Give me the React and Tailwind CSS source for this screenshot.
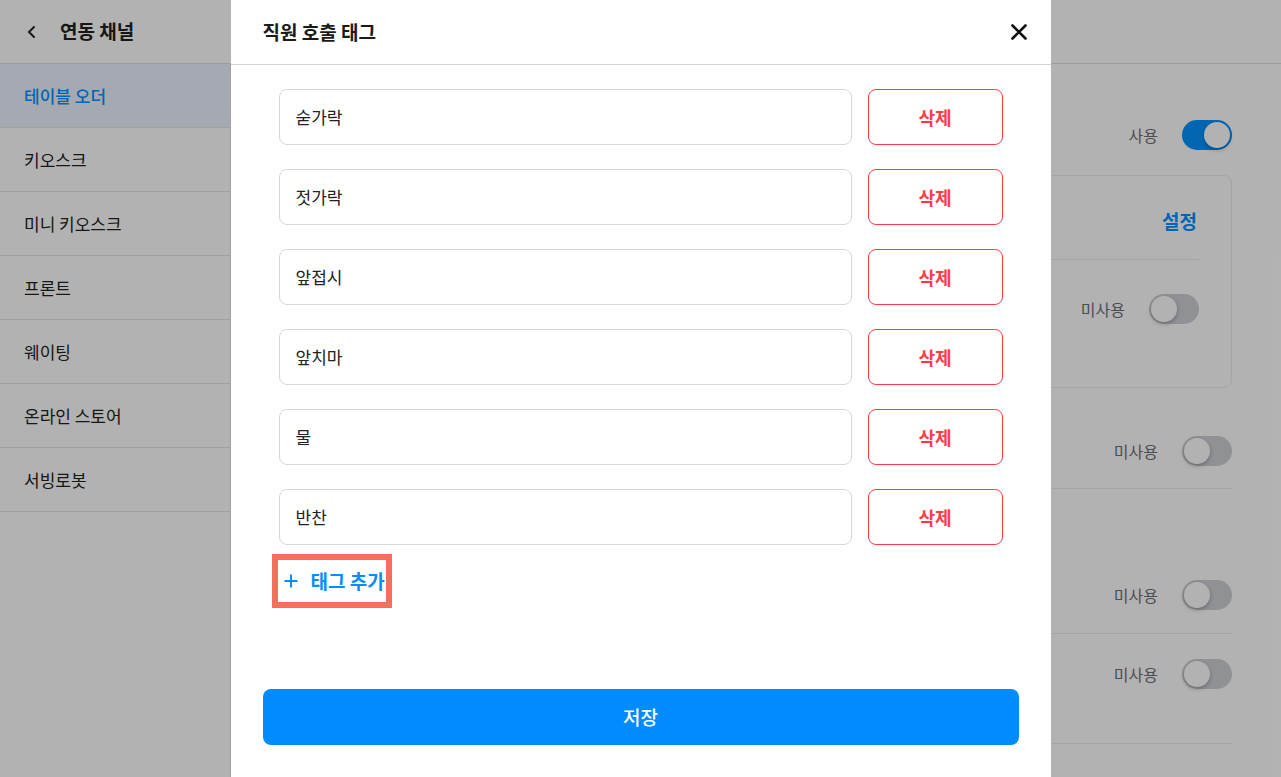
import React from "react";

const font = { fontFamily: '"Noto Sans CJK KR", "Noto Sans", sans-serif' };

function Toggle({ on }) {
  return (
    <div
      className={
        "relative w-[50px] h-[30px] rounded-full " +
        (on ? "bg-[#0092ff]" : "bg-[#cdd0d6]")
      }
    >
      <div
        className={
          "absolute top-[2px] w-[26px] h-[26px] rounded-full bg-white shadow-[0_2px_4px_rgba(0,0,0,0.25)] " +
          (on ? "right-[2px]" : "left-[2px]")
        }
      />
    </div>
  );
}

function ToggleRow({ label, on }) {
  return (
    <div className="flex items-center justify-end gap-6">
      <span className="text-[16px] text-[#6b6f7a]">{label}</span>
      <Toggle on={on} />
    </div>
  );
}

const sideItems = ["테이블 오더", "키오스크", "미니 키오스크", "프론트", "웨이팅", "온라인 스토어", "서빙로봇"];
const tags = ["숟가락", "젓가락", "앞접시", "앞치마", "물", "반찬"];

export default function App() {
  return (
    <div className="relative w-[1281px] h-[777px] overflow-hidden bg-white text-[#222]" style={font}>
      {/* underlying page */}
      <div className="flex flex-col h-full">
        <div className="h-[64px] flex items-center border-b border-[#e0e0e0] shrink-0">
          <svg width="16" height="16" viewBox="0 0 16 16" className="ml-[24px]">
            <path d="M10 3 L5 8 L10 13" fill="none" stroke="#222" strokeWidth="2" strokeLinecap="round" strokeLinejoin="round" />
          </svg>
          <span className="ml-[20px] text-[19px] font-bold">연동 채널</span>
        </div>
        <div className="flex flex-1">
          <div className="w-[231px] shrink-0 border-r border-[#e5e5e5]">
            {sideItems.map((s, i) => (
              <div
                key={s}
                className={
                  "h-[64px] flex items-center px-6 border-b border-[#e5e5e5] text-[17px] " +
                  (i === 0 ? "bg-[#edf3ff] text-[#0092ff] font-medium" : "text-[#222]")
                }
              >
                {s}
              </div>
            ))}
          </div>
          <div className="flex-1 pr-[49px] pl-12">
            <div className="mt-[56px]">
              <ToggleRow label="사용" on />
            </div>
            <div className="mt-[25px] h-[213px] border border-[#ececec] rounded-lg px-8">
              <div className="h-[84px] pt-2 flex items-center justify-end border-b border-[#e8e8e8]">
                <span className="mr-[2px] text-[19px] font-bold text-[#0092ff]">설정</span>
              </div>
              <div className="h-[98px] flex items-center justify-end">
                <ToggleRow label="미사용" />
              </div>
            </div>
            <div className="h-[101px] pt-[26px] flex items-center justify-end border-b border-[#ececec]">
              <ToggleRow label="미사용" />
            </div>
            <div className="h-[145px] pb-[23px] flex items-end justify-end border-b border-[#ececec]">
              <ToggleRow label="미사용" />
            </div>
            <div className="h-[110px] pt-[25px] flex items-start justify-end border-b border-[#ececec]">
              <ToggleRow label="미사용" />
            </div>
          </div>
        </div>
      </div>

      {/* overlay + modal */}
      <div className="absolute inset-0 bg-black/30 flex justify-center">
        <div className="w-[820px] h-full bg-white flex flex-col">
          <div className="h-[65px] shrink-0 flex items-center justify-between pl-8 pr-[20px] border-b border-[#d4d4d8]">
            <span className="text-[19px] font-bold text-[#1a1a1a]">직원 호출 태그</span>
            <svg width="24" height="24" viewBox="0 0 24 24">
              <path d="M5.5 5.5 L18.5 18.5 M18.5 5.5 L5.5 18.5" stroke="#111" strokeWidth="2.6" strokeLinecap="round" />
            </svg>
          </div>
          <div className="flex-1 px-12 pt-6 flex flex-col">
            <div className="flex flex-col gap-6">
              {tags.map((t) => (
                <div key={t} className="flex gap-4 h-[56px]">
                  <div className="flex-1 border border-[#d6d6d6] rounded-lg flex items-center pl-4 text-[17px] text-[#222]">
                    {t}
                  </div>
                  <div className="w-[135px] border border-[#ff3b45] rounded-lg flex items-center justify-center text-[18px] font-bold text-[#ff3b45]">
                    삭제
                  </div>
                </div>
              ))}
            </div>
            <div className="mt-[9px] -ml-[7px] self-start border-[6px] border-[#f4705d] h-[54px] w-[120px] flex items-center pl-[5px] bg-white">
              <svg width="16" height="16" viewBox="0 0 16 16">
                <path d="M8 1.5 V14.5 M1.5 8 H14.5" stroke="#0a8cff" strokeWidth="2" />
              </svg>
              <span className="ml-[12px] text-[19px] font-bold text-[#0a8cff] whitespace-nowrap">태그 추가</span>
            </div>
          </div>
          <div className="px-8 pb-8">
            <div className="h-[56px] rounded-lg bg-[#008cff] flex items-center justify-center text-white text-[19px] font-medium">
              저장
            </div>
          </div>
        </div>
      </div>
    </div>
  );
}
